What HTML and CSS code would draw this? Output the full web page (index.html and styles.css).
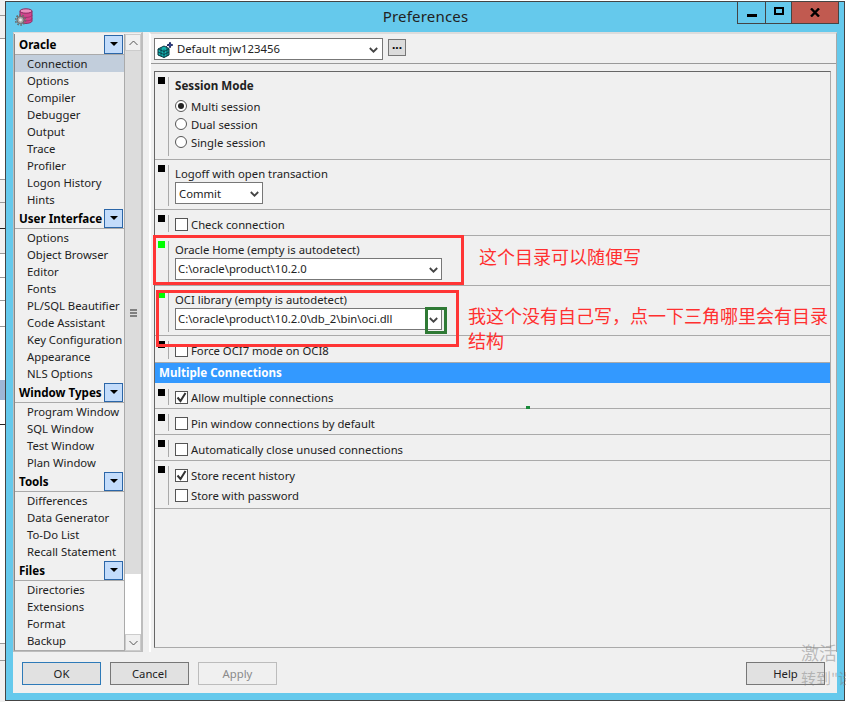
FILE: index.html
```html
<!DOCTYPE html>
<html lang="en">
<head>
<meta charset="utf-8">
<title>Preferences</title>
<link rel="stylesheet" href="styles.css">
</head>
<body>
<div class="desktop">
  <div class="strip">
    <i class="bg b1"></i><i class="bg b2"></i><i class="bg b3"></i>
    <i class="ln l1"></i><i class="ln l2"></i><i class="ln l3"></i><i class="ln l4"></i><i class="ln l5"></i><i class="ln l6"></i><i class="ln l7"></i><i class="ln l8"></i><i class="ln l9"></i><i class="ln l10"></i><i class="ln l11"></i><i class="ln l12"></i><i class="sel"></i>
  </div>
  <div class="window">
    <div class="titlebar">
      <svg class="appicon" width="18" height="18" viewBox="0 0 18 18">
        <path d="M5 3v10c0 1.3 2.6 2.4 6 2.4s6-1.1 6-2.4V3" fill="#d2458c" stroke="#8a2a60"/>
        <ellipse cx="11" cy="3" rx="6" ry="2.2" fill="#ee8fbe" stroke="#8a2a60"/>
        <path d="M5 7c0 1.3 2.6 2.4 6 2.4s6-1.1 6-2.4M5 10.5c0 1.3 2.6 2.4 6 2.4s6-1.1 6-2.4" fill="none" stroke="#a0306e"/>
        <circle cx="5.5" cy="12" r="5" fill="none" stroke="#6b6b6b" stroke-width="1.6" stroke-dasharray="1.7 1.4"/>
        <circle cx="5.5" cy="12" r="3.6" fill="#a8a8a8" stroke="#666"/>
        <circle cx="5.5" cy="12" r="1.4" fill="#ececec"/>
      </svg>
      <div class="title">Preferences</div>
      <div class="winbtns">
        <div class="wb wb-min"><span class="minbar"></span></div>
        <div class="wb wb-max"><span class="maxbox"></span></div>
        <div class="wb wb-close">
          <svg width="10" height="9" viewBox="0 0 10 9"><path d="M1 .5l8 8M9 .5l-8 8" stroke="#000" stroke-width="2.4" fill="none"/></svg>
        </div>
      </div>
    </div>
    <div class="client">
      <div class="main">
        <aside class="side">
          <div class="navlist">
            <div class="nh"><b>Oracle</b><span class="nb"><i></i></span></div>
            <div class="ni on">Connection</div><div class="ni">Options</div><div class="ni">Compiler</div><div class="ni">Debugger</div><div class="ni">Output</div><div class="ni">Trace</div><div class="ni">Profiler</div><div class="ni">Logon History</div><div class="ni">Hints</div>
            <div class="nh"><b>User Interface</b><span class="nb"><i></i></span></div>
            <div class="ni">Options</div><div class="ni">Object Browser</div><div class="ni">Editor</div><div class="ni">Fonts</div><div class="ni">PL/SQL Beautifier</div><div class="ni">Code Assistant</div><div class="ni">Key Configuration</div><div class="ni">Appearance</div><div class="ni">NLS Options</div>
            <div class="nh"><b>Window Types</b><span class="nb"><i></i></span></div>
            <div class="ni">Program Window</div><div class="ni">SQL Window</div><div class="ni">Test Window</div><div class="ni">Plan Window</div>
            <div class="nh"><b>Tools</b><span class="nb"><i></i></span></div>
            <div class="ni">Differences</div><div class="ni">Data Generator</div><div class="ni">To-Do List</div><div class="ni">Recall Statement</div>
            <div class="nh"><b>Files</b><span class="nb"><i></i></span></div>
            <div class="ni">Directories</div><div class="ni">Extensions</div><div class="ni">Format</div><div class="ni">Backup</div>
          </div>
          <div class="vscroll">
            <div class="sb-btn"><svg width="9" height="6" viewBox="0 0 9 6"><path d="M.5 5L4.5 1l4 4" fill="none" stroke="#555"/></svg></div>
            <div class="thumb"><span></span><span></span><span></span></div>
            <div class="track"></div>
            <div class="sb-btn"><svg width="9" height="6" viewBox="0 0 9 6"><path d="M.5 1L4.5 5l4-4" fill="none" stroke="#555"/></svg></div>
          </div>
        </aside>
        <div class="splitter"></div>
        <div class="right">
          <div class="toppanel">
            <div class="combo profile">
              <svg class="cubes" width="16" height="17" viewBox="0 0 16 17">
                <path d="M1 8l6-3 5 2.5V14l-5 2.5L1 14z" fill="#14b3b0" stroke="#08323c"/>
                <path d="M1 11l6 2.5 5-2.5M7 8.5v8M4 7v8M10 7v8M1 8l6 2.5L12 8" stroke="#08323c" fill="none" stroke-width=".8"/>
                <path d="M9 6l4-4M13 1l.8 2.2L16 4l-2.2.8L13 7l-.8-2.2L10 4l2.2-.8z" stroke="#101a50" fill="#2a3f9a" stroke-width=".8"/>
              </svg>
              <span class="val">Default mjw123456</span>
              <svg class="chev" width="9" height="6" viewBox="0 0 9 6"><path d="M.8 1l3.7 3.7L8.2 1" fill="none" stroke="#444" stroke-width="1.8"/></svg>
            </div>
            <div class="dots">...</div>
          </div>
          <div class="settings">
            <section class="sec s1">
              <span class="mark"></span>
              <div class="body">
                <div class="lbl strong">Session Mode</div>
                <label class="opt"><span class="radio sel-r"></span>Multi session</label>
                <label class="opt"><span class="radio"></span>Dual session</label>
                <label class="opt"><span class="radio"></span>Single session</label>
              </div>
            </section>
            <section class="sec s2">
              <span class="mark"></span>
              <div class="body">
                <div class="lbl">Logoff with open transaction</div>
                <div class="combo commit"><span class="val">Commit</span><svg class="chev" width="9" height="6" viewBox="0 0 9 6"><path d="M.8 1l3.7 3.7L8.2 1" fill="none" stroke="#444" stroke-width="1.8"/></svg></div>
              </div>
            </section>
            <section class="sec s3">
              <span class="mark"></span>
              <div class="body"><label class="opt"><span class="check"></span>Check connection</label></div>
            </section>
            <section class="sec s4">
              <span class="mark green"></span>
              <div class="body">
                <div class="lbl">Oracle Home (empty is autodetect)</div>
                <div class="combo path"><span class="val">C:\oracle\product\10.2.0</span><svg class="chev" width="9" height="6" viewBox="0 0 9 6"><path d="M.8 1l3.7 3.7L8.2 1" fill="none" stroke="#444" stroke-width="1.8"/></svg></div>
              </div>
            </section>
            <section class="sec s5">
              <span class="mark green"></span>
              <div class="body">
                <div class="lbl">OCI library (empty is autodetect)</div>
                <div class="combo path"><span class="val">C:\oracle\product\10.2.0\db_2\bin\oci.dll</span><svg class="chev" width="9" height="6" viewBox="0 0 9 6"><path d="M.8 1l3.7 3.7L8.2 1" fill="none" stroke="#444" stroke-width="1.8"/></svg></div>
              </div>
            </section>
            <section class="sec s6">
              <span class="mark"></span>
              <div class="body"><label class="opt"><span class="check"></span>Force OCI7 mode on OCI8</label></div>
            </section>
            <div class="band">Multiple Connections</div>
            <section class="sec s7">
              <span class="mark"></span>
              <div class="body"><label class="opt"><span class="check ticked"><svg width="11" height="11" viewBox="0 0 11 11"><path d="M1.5 5.5l3 3.5 5-8" fill="none" stroke="#333" stroke-width="2"/></svg></span>Allow multiple connections</label></div>
            </section>
            <section class="sec s8">
              <span class="mark"></span>
              <div class="body"><label class="opt"><span class="check"></span>Pin window connections by default</label></div>
            </section>
            <section class="sec s8">
              <span class="mark"></span>
              <div class="body"><label class="opt"><span class="check"></span>Automatically close unused connections</label></div>
            </section>
            <section class="sec s9">
              <span class="mark"></span>
              <div class="body">
                <label class="opt"><span class="check ticked"><svg width="11" height="11" viewBox="0 0 11 11"><path d="M1.5 5.5l3 3.5 5-8" fill="none" stroke="#333" stroke-width="2"/></svg></span>Store recent history</label>
                <label class="opt second"><span class="check"></span>Store with password</label>
              </div>
            </section>
          </div>
        </div>
      </div>
      <div class="footer">
        <div class="btn primary">OK</div>
        <div class="btn">Cancel</div>
        <div class="btn off">Apply</div>
        <div class="btn help">Help</div>
      </div>
    </div>
  </div>
  <div class="anno a-box1"></div>
  <div class="anno a-box2"></div>
  <div class="anno a-box3"></div>
  <div class="anno a-dot"></div>
  <div class="note n1">这个目录可以随便写</div>
  <div class="note n2">我这个没有自己写，点一下三角哪里会有目录结构</div>
  <div class="wm">激活<br><span>转到"设</span></div>
</div>
</body>
</html>
```

FILE: styles.css
```css
* { box-sizing: border-box; }
html, body { margin: 0; padding: 0; }
body { width: 846px; height: 702px; overflow: hidden; background: #fff; font-family: "Noto Sans", sans-serif; font-size: 11.3px; color: #111; }
.desktop { position: relative; display: flex; width: 846px; height: 702px; overflow: hidden; }
.strip { position: relative; flex: 0 0 5px; height: 100%; background: #fff; }
.bg { position: absolute; left: 0; width: 5px; background: #f0f0f0; }
.b1 { top: 0; height: 38px; } .b2 { top: 179px; height: 74px; } .b3 { top: 643px; height: 59px; }
.ln { position: absolute; left: 0; width: 5px; height: 1px; background: #999; }
.l1 { top: 15px; } .l2 { top: 38px; } .l3 { top: 179px; } .l4 { top: 202px; } .l5 { top: 228px; background: #222; } .l6 { top: 253px; }
.l7 { top: 277px; } .l8 { top: 300px; } .l9 { top: 326px; } .l10 { top: 424px; background: #222; } .l11 { top: 643px; } .l12 { top: 660px; }
.sel { position: absolute; left: 0; top: 380px; width: 5px; height: 20px; background: #9fb7d6; }
.window { flex: 0 0 840px; height: 700px; margin-top: 1px; background: #65c9ec; border: 1px solid #444; padding: 0 7px 7px 7px; display: flex; flex-direction: column; }
.titlebar { position: relative; flex: 0 0 30px; display: flex; align-items: center; justify-content: center; }
.appicon { position: absolute; left: 2px; top: 6px; }
.title { font-size: 15px; color: #222; margin-top: -3px; padding-left: 1px; letter-spacing: .2px; }
.winbtns { position: absolute; top: 0; right: -2px; display: flex; height: 22px; border: 1px solid #444; border-top: 0; }
.wb { display: flex; align-items: center; justify-content: center; height: 100%; }
.wb-min { width: 28px; border-right: 1px solid #444; }
.wb-max { width: 26px; border-right: 1px solid #444; }
.wb-close { width: 46px; background: #c15a50; }
.minbar { width: 10px; height: 3px; background: #000; margin-top: 6px; }
.maxbox { width: 10px; height: 8px; border: 2px solid #000; margin-top: -3px; }
.client { flex: 1; min-height: 0; background: #f0f0f0; display: flex; flex-direction: column; }
.main { flex: 0 0 620px; display: flex; min-height: 0; }
.side { flex: 0 0 130px; display: flex; border: 1px solid #bdbdbd; border-top-color: #dcdcdc; border-right-width: 2px; background: #f0f0f0; height: 620px; padding-top: 1px; }
.navlist { flex: 0 0 111px; border-left: 1px solid #888; border-right: 1px solid #aaa; border-bottom: 1px solid #aaa; background: #f0f0f0; overflow: hidden; }
.nh { display: flex; align-items: center; justify-content: space-between; height: 21px; padding: 0 1px 0 4px; border-bottom: 1px solid #aaa; font-size: 11.6px; color: #000; white-space: nowrap; }
.nh b { font-weight: 700; }
.nb { display: flex; align-items: center; justify-content: center; flex: 0 0 19px; height: 19px; background: #c3dcfb; border: 1px solid #2b66a8; }
.nb i { width: 0; height: 0; border-left: 4px solid transparent; border-right: 4px solid transparent; border-top: 4px solid #000; }
.ni { height: 17px; line-height: 18px; padding-left: 12px; white-space: nowrap; color: #222; }
.ni.on { background: #c2cedc; }
.vscroll { flex: 0 0 16px; display: flex; flex-direction: column; background: #fff; }
.sb-btn { flex: 0 0 17px; background: #f0f0f0; border: 1px solid #ccc; display: flex; align-items: center; justify-content: center; }
.thumb { flex: 0 0 523px; background: #dcdcdc; display: flex; flex-direction: column; justify-content: center; align-items: center; gap: 1px; }
.thumb span { width: 7px; height: 2px; background: #808080; }
.track { flex: 1; background: #fff; }
.splitter { flex: 0 0 6px; }
.right { flex: 1; display: flex; flex-direction: column; background: #f0f0f0; border-top: 2px solid #dcdcdc; border-left: 2px solid #fff; border-right: 1px solid #a8a8a8; height: 620px; }
.toppanel { display: flex; align-items: flex-start; gap: 5px; flex: 0 0 30px; padding: 4px 0 0 3px; border-bottom: 1px solid #999; }
.combo { position: relative; display: flex; align-items: center; background: #fff; border: 1px solid #777; height: 22px; }
.profile { width: 229px; padding-left: 2px; }
.cubes { flex: 0 0 16px; margin-right: 4px; }
.val { white-space: nowrap; color: #222; margin-top: -2px; }
.commit .val { margin-top: 0; }
.chev { position: absolute; right: 3px; top: 8px; }
.profile .chev { right: 4px; }
.dots { width: 18px; height: 17px; background: #dcdcdc; border: 1px solid #777; margin-top: 1px; font-weight: 700; line-height: 10px; text-align: center; font-size: 12px; color: #000; }
.settings { flex: 0 0 577px; margin: 7px 5px 0 3px; border: 1px solid #666; border-right-color: #aaa; border-bottom-color: #aaa; }
.sec { display: flex; border-bottom: 1px solid #aaa; padding: 5px 0 0 3px; }
.mark { flex: 0 0 7px; height: 7px; background: #000; }
.mark.green { background: #00ff00; }
.body { flex: 1; margin: 0 0 3px 3px; padding-left: 6px; border-left: 1px solid #aaa; }
.s1 { height: 88px; } .s2 { height: 50px; } .s3 { height: 26px; } .s4 { height: 50px; } .s5 { height: 50px; } .s6 { height: 27px; }
.s7 { height: 25px; } .s8 { height: 26px; } .s9 { height: 48px; }
.lbl { height: 16px; line-height: 16px; margin-top: 1px; color: #222; white-space: nowrap; }
.strong { font-weight: 700; height: 19px; font-size: 11.6px; }
.opt { display: flex; align-items: center; height: 18px; color: #222; gap: 3px; white-space: nowrap; }
.radio { width: 12px; height: 12px; margin-right: 1px; border-radius: 50%; border: 1px solid #555; background: #fff; position: relative; }
.sel-r::after { content: ""; position: absolute; left: 2px; top: 2px; width: 6px; height: 6px; border-radius: 50%; background: #222; }
.check { display: flex; align-items: center; justify-content: center; width: 13px; height: 13px; border: 1px solid #555; background: #fff; }
.s7 .opt { margin-top: -1px; }
.s9 .opt.second { margin-top: 2px; }
.commit { width: 88px; padding-left: 3px; }
.path { width: 267px; padding-left: 2px; }
.band { height: 21px; line-height: 19px; padding-left: 4px; background: #3399ff; color: #fff; font-weight: 700; font-size: 11.6px; border-bottom: 1px solid #f0f0f0; }
.footer { flex: 1; display: flex; gap: 9px; padding: 10px 0 0 9px; }
.btn { width: 79px; height: 23px; background: #e1e1e1; border: 1px solid #777; line-height: 21px; text-align: center; color: #222; }
.primary { border-color: #2e7ab8; }
.off { background: #f0f0f0; border-color: #bcbcbc; color: #8a8a8a; }
.help { margin-left: auto; margin-right: 12px; }
.anno { position: absolute; pointer-events: none; }
.a-box1 { left: 153px; top: 235px; width: 311px; height: 50px; border: 3px solid #ff3535; }
.a-box2 { left: 156px; top: 290px; width: 303px; height: 57px; border: 3px solid #ff3535; }
.a-box3 { left: 425px; top: 307px; width: 22px; height: 27px; border: 3px solid #2f7a35; }
.a-dot { left: 526px; top: 406px; width: 4px; height: 3px; background: #1a8a3a; }
.note { position: absolute; color: #ff3030; font-family: "Noto Sans CJK SC", sans-serif; font-size: 18px; }
.n1 { left: 479px; top: 245px; line-height: 22px; }
.n2 { left: 468px; top: 303px; width: 366px; line-height: 25px; }
.wm { position: absolute; left: 801px; top: 640px; width: 45px; height: 50px; overflow: hidden; color: rgba(120,120,120,.45); font-family: "Noto Sans CJK SC", sans-serif; font-size: 18px; line-height: 24px; white-space: nowrap; }
.wm span { font-size: 15px; }
```
